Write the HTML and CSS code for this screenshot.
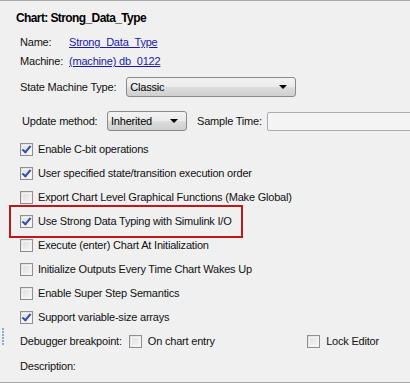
FILE: index.html
```html
<!DOCTYPE html>
<html>
<head>
<meta charset="utf-8">
<link rel="stylesheet" href="styles.css">
</head>
<body>
<div class="panel">
  <div class="title">Chart: Strong_Data_Type</div>
  <div class="info">
    <div class="inforow"><span class="ilabel">Name:</span><a class="link">Strong_Data_Type</a></div>
    <div class="inforow"><span class="ilabel">Machine:</span><a class="link">(machine) db_0122</a></div>
  </div>
  <div class="smt">
    <span>State Machine Type:</span>
    <div class="select select-smt"><span>Classic</span><span class="arrow"></span></div>
  </div>
  <div class="upd">
    <span class="ulabel">Update method:</span>
    <div class="select select-upd"><span>Inherited</span><span class="arrow"></span></div>
    <span class="st">Sample Time:</span>
    <div class="input"></div>
  </div>
  <div class="checks">
    <div class="cb"><span class="box checked"></span><span>Enable C-bit operations</span></div>
    <div class="cb"><span class="box checked"></span><span>User specified state/transition execution order</span></div>
    <div class="cb"><span class="box"></span><span>Export Chart Level Graphical Functions (Make Global)</span></div>
    <div class="cb hl"><span class="box checked"></span><span>Use Strong Data Typing with Simulink I/O</span></div>
    <div class="cb"><span class="box"></span><span>Execute (enter) Chart At Initialization</span></div>
    <div class="cb"><span class="box"></span><span>Initialize Outputs Every Time Chart Wakes Up</span></div>
    <div class="cb"><span class="box"></span><span>Enable Super Step Semantics</span></div>
    <div class="cb"><span class="box checked"></span><span>Support variable-size arrays</span></div>
  </div>
  <div class="dbg">
    <span class="grip"></span>
    <span class="dlabel">Debugger breakpoint:</span>
    <div class="cb inline"><span class="box"></span><span>On chart entry</span></div>
    <div class="cb inline lock"><span class="box"></span><span>Lock Editor</span></div>
  </div>
  <div class="desc">Description:</div>
</div>
</body>
</html>
```
FILE: styles.css
```css
html, body {
  margin: 0;
  padding: 0;
  background: #f0f0f0;
}
body {
  width: 410px;
  height: 383px;
  overflow: hidden;
  font-family: "Liberation Sans", Arial, sans-serif;
  font-size: 11px;
  letter-spacing: -0.2px;
  color: #111;
  white-space: nowrap;
}
.panel {
  box-sizing: border-box;
  height: 383px;
  border-top: 1px solid #a8a8a8;
  border-bottom: 1px solid #a8a8a8;
  position: relative;
  overflow: hidden;
}
.title {
  font-weight: bold;
  font-size: 12px;
  letter-spacing: -0.6px;
  padding: 9px 0 0 16px;
  height: 16px;
  line-height: 16px;
  color: #000;
}
.info {
  padding: 8px 0 0 20px;
  display: flex;
  flex-direction: column;
  gap: 3px;
}
.inforow {
  display: flex;
  height: 16px;
  line-height: 16px;
}
.ilabel {
  width: 49px;
}
.link {
  color: #1a1aa6;
  text-decoration: underline;
}
.smt {
  display: flex;
  align-items: center;
  padding: 8px 0 0 20px;
  gap: 10px;
}
.select {
  box-sizing: border-box;
  flex-shrink: 0;
  height: 20px;
  border: 1px solid #8a8a8a;
  border-radius: 3px;
  background: linear-gradient(#f2f2f2, #ebebeb 50%, #dddddd 51%, #cfcfcf);
  display: flex;
  align-items: center;
  justify-content: space-between;
  padding: 0 8px 0 3px;
  color: #000;
}
.select-smt { width: 170px; }
.select-upd { width: 80px; }
.arrow {
  width: 0;
  height: 0;
  border-left: 4px solid transparent;
  border-right: 4px solid transparent;
  border-top: 4px solid #000;
}
.upd {
  display: flex;
  align-items: center;
  padding: 14px 0 0 22px;
}
.ulabel { width: 85px; flex-shrink: 0; }
.st { margin-left: 10px; width: 70px; flex-shrink: 0; }
.input {
  box-sizing: border-box;
  flex-shrink: 0;
  width: 160px;
  height: 19px;
  border: 1px solid #acacac;
  border-radius: 2px;
  background: #f4f4f4;
}
.checks {
  display: flex;
  flex-direction: column;
  padding: 10px 0 0 20px;
  gap: 8px;
}
.cb {
  display: flex;
  align-items: center;
  gap: 5px;
  height: 16px;
  position: relative;
}
.box {
  box-sizing: border-box;
  flex-shrink: 0;
  width: 13px;
  height: 13px;
  border: 1px solid #8f8f8f;
  background: linear-gradient(135deg, #dcdcdc, #f8f8f8);
  position: relative;
}
.box::after {
  content: "";
  position: absolute;
  inset: 1px;
  border: 1px solid #f6f6f6;
}
.box.checked::before {
  content: "";
  position: absolute;
  left: 3px;
  top: 0px;
  width: 3px;
  height: 7px;
  border-right: 2px solid #3a4fa0;
  border-bottom: 2px solid #3a4fa0;
  transform: rotate(40deg);
  z-index: 1;
}
.hl::before {
  content: "";
  position: absolute;
  left: -11px;
  top: -8px;
  width: 230px;
  height: 29px;
  border: 2px solid #c01818;
}
.dbg {
  display: flex;
  align-items: center;
  padding: 8px 0 0 20px;
  position: relative;
}
.grip {
  position: absolute;
  left: 2px;
  top: 3px;
  width: 2px;
  height: 18px;
  background: repeating-linear-gradient(#8fa6d8 0 2px, transparent 2px 3px);
}
.dlabel { margin-right: 7px; }
.cb.inline { gap: 6px; }
.lock { margin-left: auto; margin-right: 31px; }
.desc {
  padding: 9px 0 0 20px;
  height: 16px;
  line-height: 16px;
}
```
